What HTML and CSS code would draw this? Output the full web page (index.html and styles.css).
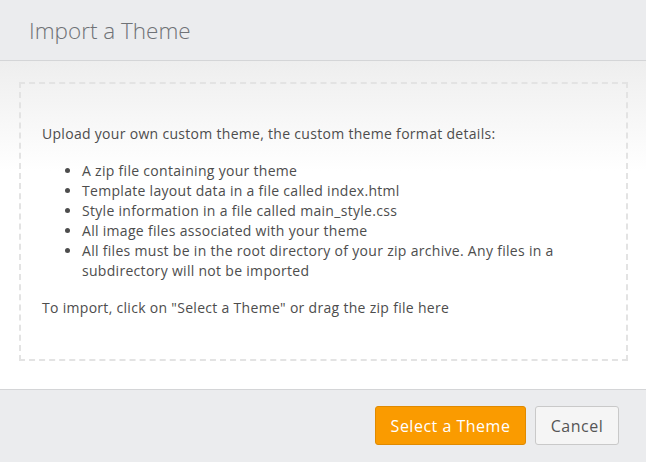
FILE: index.html
```html
<!DOCTYPE html>
<html>
<head>
<meta charset="utf-8">
<link rel="stylesheet" href="styles.css">
</head>
<body>
<div class="modal">
  <div class="header"><h1 class="title">Import a Theme</h1></div>
  <div class="body">
    <div class="dropzone">
      <p class="intro">Upload your own custom theme, the custom theme format details:</p>
      <ul class="list">
        <li>A zip file containing your theme</li>
        <li>Template layout data in a file called index.html</li>
        <li>Style information in a file called main_style.css</li>
        <li>All image files associated with your theme</li>
        <li>All files must be in the root directory of your zip archive. Any files in a subdirectory will not be imported</li>
      </ul>
      <p class="hint">To import, click on "Select a Theme" or drag the zip file here</p>
    </div>
  </div>
  <div class="footer">
    <button class="btn btn-primary">Select a Theme</button>
    <button class="btn btn-default">Cancel</button>
  </div>
</div>
</body>
</html>
```
FILE: styles.css
```css
* { box-sizing: border-box; }
html, body { margin: 0; padding: 0; }
body {
  width: 646px;
  height: 462px;
  font-family: "Open Sans", "Lato", sans-serif;
  color: #555;
  background: #fff;
  overflow: hidden;
}
.modal { display: flex; flex-direction: column; height: 462px; }
.header {
  height: 61px;
  background: #ebecee;
  border-bottom: 1px solid #d4d5d7;
  display: flex;
  align-items: center;
  padding-left: 29px;
}
.title {
  margin: 0;
  font-size: 22.5px;
  font-weight: 300;
  color: #6f7276;
}
.body {
  height: 328px;
  padding: 21px 18px 28px 19px;
  background: linear-gradient(#eeeeee 0, #ffffff 110px);
}
.dropzone {
  height: 279px;
  border: 2px dashed #e3e3e3;
  padding: 40px 20px 0 21px;
  font-size: 14px;
  letter-spacing: 0.3px;
  line-height: 20px;
  color: #4d4d4d;
}
.intro { margin: 0 0 17px; }
.list { margin: 0 0 17px; padding-left: 40px; }
.list li { padding-right: 30px; }
.hint { margin: 0; }
.footer {
  flex: 1;
  background: #ebecee;
  border-top: 1px solid #d4d5d7;
  display: flex;
  justify-content: flex-end;
  align-items: flex-start;
  gap: 9px;
  padding: 16px 27px 0 0;
}
.btn {
  height: 39px;
  font-family: inherit;
  font-size: 16px;
  letter-spacing: 0.5px;
  border-radius: 3px;
  padding: 0;
}
.btn-primary {
  background: #fa9b00;
  border: 1px solid #e08a00;
  color: #fff;
  width: 151px;
}
.btn-default {
  background: #f5f5f5;
  border: 1px solid #c9c9c9;
  color: #555;
  width: 84px;
}
```
